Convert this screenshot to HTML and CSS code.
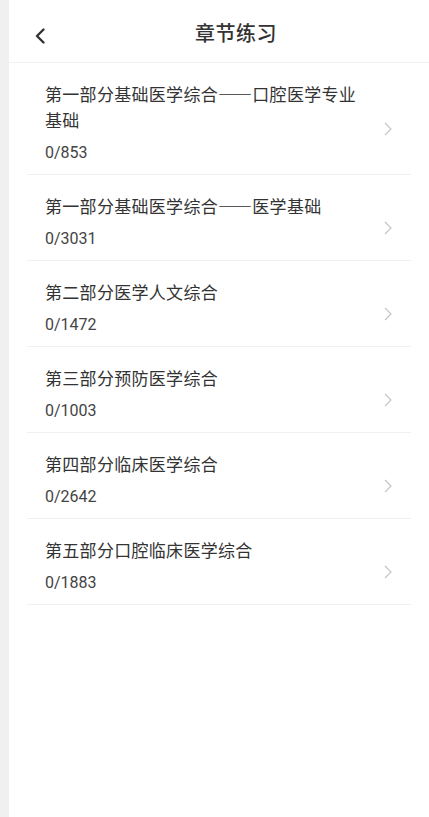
FILE: index.html
```html
<!DOCTYPE html>
<html lang="zh-CN">
<head>
  <meta charset="UTF-8">
  <meta name="viewport" content="width=device-width, initial-scale=1.0">
  <title>章节练习</title>
  <link rel="stylesheet" href="styles.css">
</head>
<body>
  <div class="page">
    <header class="topbar">
      <span class="back">
        <svg width="10" height="16" viewBox="0 0 10 16"><path d="M8.5 1.5 L2 8 L8.5 14.5" fill="none" stroke="#333" stroke-width="2.4" stroke-linecap="round" stroke-linejoin="round"/></svg>
      </span>
      <h1 class="title">章节练习</h1>
    </header>

    <ul class="chapter-list">
      <li class="chapter">
        <div class="info">
          <div class="name">第一部分基础医学综合——口腔医学专业基础</div>
          <div class="count">0/853</div>
        </div>
        <svg class="arrow" width="8" height="14" viewBox="0 0 8 14"><path d="M1 1 L7 7 L1 13" fill="none" stroke="#c6c6c6" stroke-width="1.2"/></svg>
      </li>
      <li class="chapter">
        <div class="info">
          <div class="name">第一部分基础医学综合——医学基础</div>
          <div class="count">0/3031</div>
        </div>
        <svg class="arrow" width="8" height="14" viewBox="0 0 8 14"><path d="M1 1 L7 7 L1 13" fill="none" stroke="#c6c6c6" stroke-width="1.2"/></svg>
      </li>
      <li class="chapter">
        <div class="info">
          <div class="name">第二部分医学人文综合</div>
          <div class="count">0/1472</div>
        </div>
        <svg class="arrow" width="8" height="14" viewBox="0 0 8 14"><path d="M1 1 L7 7 L1 13" fill="none" stroke="#c6c6c6" stroke-width="1.2"/></svg>
      </li>
      <li class="chapter">
        <div class="info">
          <div class="name">第三部分预防医学综合</div>
          <div class="count">0/1003</div>
        </div>
        <svg class="arrow" width="8" height="14" viewBox="0 0 8 14"><path d="M1 1 L7 7 L1 13" fill="none" stroke="#c6c6c6" stroke-width="1.2"/></svg>
      </li>
      <li class="chapter">
        <div class="info">
          <div class="name">第四部分临床医学综合</div>
          <div class="count">0/2642</div>
        </div>
        <svg class="arrow" width="8" height="14" viewBox="0 0 8 14"><path d="M1 1 L7 7 L1 13" fill="none" stroke="#c6c6c6" stroke-width="1.2"/></svg>
      </li>
      <li class="chapter">
        <div class="info">
          <div class="name">第五部分口腔临床医学综合</div>
          <div class="count">0/1883</div>
        </div>
        <svg class="arrow" width="8" height="14" viewBox="0 0 8 14"><path d="M1 1 L7 7 L1 13" fill="none" stroke="#c6c6c6" stroke-width="1.2"/></svg>
      </li>
    </ul>
  </div>
</body>
</html>
```

FILE: styles.css
```css
body { margin: 0; background: #f0f0f0; font-family: "Noto Sans CJK SC", sans-serif; color: #333; }
.page { margin-left: 9px; background: #fff; min-height: 100vh; }

.topbar { height: 58px; padding: 4px 0 0 26px; display: flex; align-items: center; border-bottom: 1px solid #f2f2f2; }
.back { width: 10px; height: 16px; margin-top: 5px; display: flex; }
.title { margin: 0 0 0 150px; font-size: 20px; font-weight: 500; letter-spacing: 0.5px; line-height: 26px; }

.chapter-list { list-style: none; margin: 0 18px; padding: 0; }
.chapter { display: flex; align-items: center; padding: 18px 19px 10px 18px; border-bottom: 1px solid #f0f0f0; }
.info { flex: 1; }
.name { font-size: 17px; letter-spacing: 0.3px; line-height: 26px; color: #333; }
.count { margin-top: 9px; font-family: Roboto, sans-serif; font-size: 16px; line-height: 22px; color: #444; }
.arrow { margin: 12px 0 0 16px; flex-shrink: 0; }
```
